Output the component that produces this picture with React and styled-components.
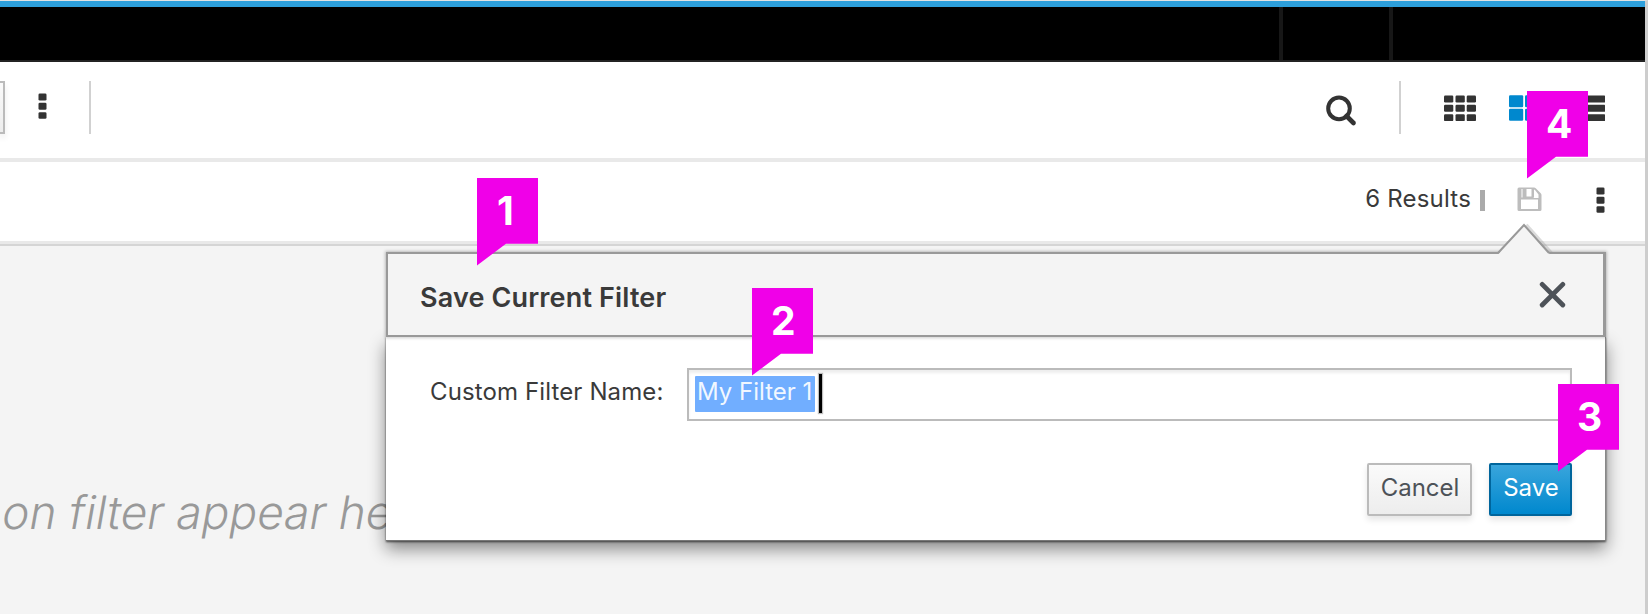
import React from 'react';
import styled, { createGlobalStyle } from 'styled-components';

const GlobalStyle = createGlobalStyle`
  *, *::before, *::after { box-sizing: border-box; }
  body {
    margin: 0;
    background: #f4f4f4;
    font-family: Inter, "Liberation Sans", sans-serif;
    color: #3a3a3a;
  }
`;

const Frame = styled.div`
  position: relative;
  display: flex;
  flex-direction: column;
  width: 1648px;
  height: 614px;
  overflow: hidden;
  border-top: 1px solid #dfe3e4;
  border-right: 3px solid #cdcdcd;
  background: #f4f4f4;
`;

const Masthead = styled.header`
  display: flex;
  justify-content: flex-end;
  flex: none;
  height: 61px;
  background: #000;
  border-top: 6px solid #2d9fdb;
  border-bottom: 2px solid #232323;
`;

const MastheadCell = styled.div`
  width: ${(p) => p.$width}px;
  border-left: 4px solid #171717;
`;

const Bar = styled.div`
  display: flex;
  align-items: flex-start;
  flex: none;
  background: #fff;
`;

const Toolbar = styled(Bar)`
  height: 100px;
  padding: 19px 40px 0 0;
  border-bottom: 4px solid #e9e9e9;
`;

const ResultsBar = styled(Bar)`
  justify-content: flex-end;
  height: 84px;
  padding: 25px 40px 0 0;
  border-bottom: 2px solid #d5d5d5;
  box-shadow: inset 0 -3px 0 #e9e9e9;
`;

const ButtonEdge = styled.div`
  width: 5px;
  height: 53px;
  border: 2px solid #bbb;
  border-left: 0;
  background: linear-gradient(#fafafa, #ededed);
  box-shadow: 0 4px 6px rgba(0, 0, 0, 0.08);
`;

const Divider = styled.div`
  width: 2px;
  height: 53px;
  background: #d1d1d1;
`;

const Spacer = styled.div`
  flex: 1;
`;

const Icon = styled.svg`
  display: block;
  flex: none;
  margin: ${(p) => p.$margin || 0};
`;

const ResultCount = styled.span`
  margin-top: -3px;
  font-size: 24px;
  line-height: 29px;
  letter-spacing: 0.2px;
  white-space: nowrap;
`;

const CountMark = styled.span`
  width: 5px;
  height: 21px;
  margin: 3px 32px 0 9px;
  background: #aaa;
`;

const Content = styled.main`
  flex: 1;
  padding: 236px 0 0;
`;

const EmptyMessage = styled.p`
  margin: 0;
  font-size: 46px;
  line-height: 60px;
  font-weight: 290;
  letter-spacing: -0.05px;
  white-space: nowrap;
  color: #999;
  transform: skewX(-10deg);
  transform-origin: 0 78%;
`;

const Popover = styled.section`
  position: absolute;
  left: 386px;
  top: 251px;
  width: 1220px;
  height: 289px;
  background: #fff;
  box-shadow: 0 0 2px rgba(0, 0, 0, 0.1);
`;

const PopoverHeader = styled.div`
  position: relative;
  z-index: 1;
  display: flex;
  align-items: flex-start;
  justify-content: space-between;
  height: 85px;
  padding: 27px 37px 0 32px;
  border: 2px solid #999;
  border-right-width: 3px;
  background: #f4f4f4;
  box-shadow: 0 0 3px 1px rgba(0, 0, 0, 0.2);
`;

const Arrow = styled.svg`
  position: absolute;
  left: 1107px;
  top: -32px;
`;

const Title = styled.h2`
  margin: 0;
  font-size: 27px;
  line-height: 33px;
  font-weight: 600;
  letter-spacing: 0.15px;
  white-space: nowrap;
`;

const PopoverBody = styled.div`
  height: 204px;
  padding: 31px 33px 0 44px;
  background: #fff;
  border-right: 1px solid #888;
  border-bottom: 1px solid #777;
  box-shadow: 0 8px 16px rgba(0, 0, 0, 0.45), 0 1px 2px rgba(0, 0, 0, 0.6);
`;

const Field = styled.div`
  display: flex;
  justify-content: space-between;
`;

const Label = styled.label`
  padding-top: 9px;
  font-size: 24px;
  line-height: 29px;
  letter-spacing: 0.12px;
  white-space: nowrap;
`;

const Input = styled.div`
  display: flex;
  align-items: flex-start;
  width: 885px;
  height: 53px;
  padding: 4px 6px;
  border: 2px solid #bbb;
  background: #fff;
  box-shadow: inset 0 3px 3px rgba(0, 0, 0, 0.07);
`;

const Selection = styled.span`
  width: 120px;
  height: 36px;
  margin-top: 2px;
  padding: 1px 0 0 2px;
  border-radius: 1px;
  background: #71aeff;
  color: rgba(255, 255, 255, 0.92);
  font-size: 24px;
  line-height: 29px;
  white-space: nowrap;
`;

const Caret = styled.span`
  width: 3px;
  height: 39px;
  margin-left: 4px;
  background: #000;
  box-shadow: 0 0 1px 1px rgba(0, 0, 0, 0.25);
`;

const Actions = styled.div`
  display: flex;
  justify-content: flex-end;
  gap: 17px;
  margin-top: 42px;
`;

const Button = styled.button`
  width: ${(p) => (p.$primary ? 83 : 105)}px;
  height: 53px;
  padding: 0 0 4px 1px;
  border: 2px solid ${(p) => (p.$primary ? '#00659c' : '#bbb')};
  border-radius: 2px;
  background: ${(p) =>
    p.$primary ? 'linear-gradient(#39a5dc, #0088ce)' : 'linear-gradient(#fafafa, #ededed)'};
  box-shadow: 0 4px 6px rgba(3, 3, 3, 0.1);
  color: ${(p) => (p.$primary ? '#fff' : '#4d5258')};
  font-family: inherit;
  font-size: 24px;
  line-height: 29px;
  white-space: nowrap;
`;

const Callout = styled.div`
  position: absolute;
  z-index: 3;
  left: ${(p) => p.$x}px;
  top: ${(p) => p.$y - 1}px;
  width: 61px;
  height: 87.5px;
  padding: 12px 0 0 ${(p) => p.$inset}px;
  background: #f000e8;
  clip-path: polygon(0 0, 100% 0, 100% 65.7px, 29px 65.7px, 0 100%);
  color: #fff;
  font-size: 39px;
  line-height: 42px;
  font-weight: 650;
  text-align: left;
`;

const Kebab = ({ margin }) => (
  <Icon $margin={margin} width="9" height="26" viewBox="0 0 9 26" fill="#333">
    <rect x="0.5" y="0.5" width="8" height="7" rx="1.3" />
    <rect x="0.5" y="9.8" width="8" height="7" rx="1.3" />
    <rect x="0.5" y="19.2" width="8" height="6.6" rx="1.3" />
  </Icon>
);

const SearchIcon = () => (
  <Icon $margin="14px 42px 0 0" width="31" height="32" viewBox="0 0 31 32" fill="none" stroke="#333">
    <circle cx="13" cy="13.4" r="10.8" strokeWidth="4" />
    <path d="M20.5 21 L27.5 28" strokeWidth="4.6" strokeLinecap="round" />
  </Icon>
);

const GridIcon = () => (
  <Icon $margin="14px 33px 0 43px" width="32" height="26" viewBox="0 0 32 26" fill="#333">
    {[0.5, 9.8, 19.2].map((y) =>
      [0, 11.5, 22.7].map((x) => <rect key={`${x}-${y}`} x={x} y={y} width="9.3" height="7" rx="1.2" />)
    )}
  </Icon>
);

const TilesIcon = () => (
  <Icon $margin="14px 32px 0 0" width="32" height="26" viewBox="0 0 32 26" fill="#0088ce">
    {[0.3, 13.8].map((y) =>
      [0, 16].map((x) => <rect key={`${x}-${y}`} x={x} y={y} width="14.2" height="12" rx="1.2" />)
    )}
  </Icon>
);

const ListIcon = () => (
  <Icon $margin="14px 0 0" width="32" height="26" viewBox="0 0 32 26" fill="#333">
    {[0.5, 9.8, 19.2].map((y) => <rect key={y} y={y} width="32" height="7" rx="0.6" />)}
  </Icon>
);

const SaveIcon = () => (
  <Icon width="25" height="25" viewBox="0 0 25 25">
    <path
      fill="#bdbdbd"
      fillRule="evenodd"
      d="M2 0.5 H17 Q18 0.5 19 1.5 L23.5 6 Q24.5 7 24.5 8 V22.5 Q24.5 24 23 24 H2 Q0.5 24 0.5 22.5 V2 Q0.5 0.5 2 0.5 Z M4 12.5 V22 H21 V12.5 Z M9.5 2 V9.5 H14.5 V2 Z M17 2.5 V10 Q17 11 16 11 H21.5 V7.5 L18 3 Z"
    />
    <rect x="4" y="2" width="2" height="8.5" fill="#dedede" />
  </Icon>
);

const CloseIcon = () => (
  <Icon width="27" height="27" viewBox="0 0 27 27" stroke="#4d5258" strokeWidth="4.8" strokeLinecap="round">
    <path d="M3.2 3.4 L23.8 24 M23.8 3.4 L3.2 24" />
  </Icon>
);

export default function App() {
  return (
    <>
      <GlobalStyle />
      <Frame>
        <Masthead>
          <MastheadCell $width={110} />
          <MastheadCell $width={256} />
        </Masthead>
        <Toolbar>
          <ButtonEdge />
          <Kebab margin="12px 42px 0 33px" />
          <Divider />
          <Spacer />
          <SearchIcon />
          <Divider />
          <GridIcon />
          <TilesIcon />
          <ListIcon />
        </Toolbar>
        <ResultsBar>
          <ResultCount>6 Results</ResultCount>
          <CountMark />
          <SaveIcon />
          <Kebab margin="0 0 0 54px" />
        </ResultsBar>
        <Content>
          <EmptyMessage>on filter appear he</EmptyMessage>
        </Content>
        <Popover>
          <PopoverHeader>
            <Title>Save Current Filter</Title>
            <CloseIcon />
            <Arrow width="60" height="34" viewBox="0 0 60 34">
              <path d="M3 34 V32.5 L29 3 L55 32.5 V34 Z" fill="#f4f4f4" />
              <path d="M31 3 L56 31" fill="none" stroke="#999" strokeOpacity="0.35" strokeWidth="4" />
              <path d="M3 31 L29 3 L54 31" fill="none" stroke="#999" strokeWidth="2" />
            </Arrow>
          </PopoverHeader>
          <PopoverBody>
            <Field>
              <Label>Custom Filter Name:</Label>
              <Input>
                <Selection>My Filter 1</Selection>
                <Caret />
              </Input>
            </Field>
            <Actions>
              <Button>Cancel</Button>
              <Button $primary>Save</Button>
            </Actions>
          </PopoverBody>
        </Popover>
        <Callout $x={477} $y={178} $inset={20}>1</Callout>
        <Callout $x={752} $y={288} $inset={19}>2</Callout>
        <Callout $x={1558} $y={384} $inset={19}>3</Callout>
        <Callout $x={1527} $y={91} $inset={19}>4</Callout>
      </Frame>
    </>
  );
}
